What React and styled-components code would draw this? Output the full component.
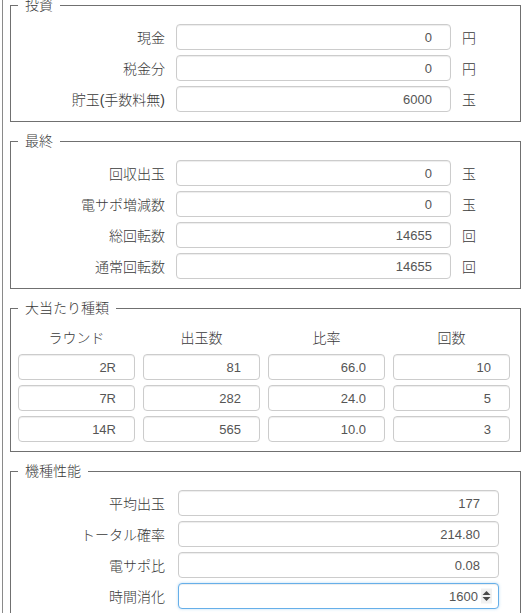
import React from "react";
import styled, { createGlobalStyle, css } from "styled-components";

const GlobalStyle = createGlobalStyle`
  html, body {
    margin: 0;
    padding: 0;
    background: #fff;
  }
  body {
    font-family: "Liberation Sans", "Noto Sans CJK JP", sans-serif;
    font-size: 14px;
    font-weight: 300;
    color: #3a3a3a;
  }
`;

const Page = styled.div`
  margin: -5px 0 0 2px;
  padding: 0 2px 0 7px;
  border-left: 1px solid #8a8a8a;
  min-height: 640px;
`;

const Group = styled.fieldset`
  margin: 0 0 9px;
  padding: 9px 7px 9px;
  border: 1px solid #707070;
  min-width: 0;
`;

const Caption = styled.legend`
  padding: 0 7px;
  font-size: 14px;
  line-height: 20px;
  color: #3a3a3a;
`;

const Rows = styled.div`
  display: flex;
  flex-direction: column;
  gap: 5px;
`;

const Row = styled.div`
  display: grid;
  grid-template-columns: 147px ${({ $inputWidth }) => $inputWidth}px auto;
  column-gap: ${({ $gap }) => $gap}px;
  align-items: center;
`;

const Label = styled.label`
  text-align: right;
  white-space: nowrap;
  font-size: 14px;
  color: #3a3a3a;
`;

const Unit = styled.span`
  font-size: 14px;
  color: #3a3a3a;
`;

const FieldWrap = styled.div`
  position: relative;
`;

const Field = styled.input`
  box-sizing: border-box;
  display: block;
  width: 100%;
  height: 26px;
  padding: 0 18px 0 12px;
  border: 1px solid #ccc;
  border-radius: 4px;
  background: #fff;
  box-shadow: inset 0 1px 1px rgba(0, 0, 0, 0.075);
  font-family: "Liberation Sans", sans-serif;
  font-size: 13px;
  color: #555;
  text-align: right;
  outline: none;

  ${({ $focused }) =>
    $focused &&
    css`
      padding-right: 20px;
      border-color: #66afe9;
      box-shadow: inset 0 1px 1px rgba(0, 0, 0, 0.075),
        0 0 3px rgba(102, 175, 233, 0.45);
    `}
`;

const Spinner = styled.span`
  position: absolute;
  right: 7px;
  top: 50%;
  transform: translateY(-50%);
  display: flex;
  align-items: center;
  justify-content: center;
  width: 11px;
  height: 15px;
  background: #f1f1f1;
`;

const Table = styled.div`
  display: grid;
  grid-template-columns: repeat(4, 117px);
  column-gap: 8px;
  row-gap: 5px;
`;

const HeadCell = styled.div`
  height: 22px;
  line-height: 22px;
  text-align: center;
  font-size: 14px;
  color: #3a3a3a;
`;

const invest = [
  { label: "現金", value: "0", unit: "円" },
  { label: "税金分", value: "0", unit: "円" },
  { label: "貯玉(手数料無)", value: "6000", unit: "玉" },
];

const result = [
  { label: "回収出玉", value: "0", unit: "玉" },
  { label: "電サポ増減数", value: "0", unit: "玉" },
  { label: "総回転数", value: "14655", unit: "回" },
  { label: "通常回転数", value: "14655", unit: "回" },
];

const bonusHead = ["ラウンド", "出玉数", "比率", "回数"];

const bonus = [
  ["2R", "81", "66.0", "10"],
  ["7R", "282", "24.0", "5"],
  ["14R", "565", "10.0", "3"],
];

const spec = [
  { label: "平均出玉", value: "177" },
  { label: "トータル確率", value: "214.80" },
  { label: "電サポ比", value: "0.08" },
  { label: "時間消化", value: "1600", spin: true },
];

const SpinIcon = () => (
  <svg width="9" height="11" viewBox="0 0 9 11">
    <path d="M4.5 0.5L8.5 4.5H0.5Z M0.5 6.5H8.5L4.5 10.5Z" fill="#4a4a4a" />
  </svg>
);

const UnitRows = ({ items }) => (
  <Rows>
    {items.map((item) => (
      <Row key={item.label} $inputWidth={275} $gap={11}>
        <Label>{item.label}</Label>
        <Field type="text" value={item.value} readOnly />
        <Unit>{item.unit}</Unit>
      </Row>
    ))}
  </Rows>
);

const App = () => {
  return (
    <>
      <GlobalStyle />
      <Page>
        <Group>
          <Caption>投資</Caption>
          <UnitRows items={invest} />
        </Group>

        <Group>
          <Caption>最終</Caption>
          <UnitRows items={result} />
        </Group>

        <Group>
          <Caption>大当たり種類</Caption>
          <Table>
            {bonusHead.map((h) => (
              <HeadCell key={h}>{h}</HeadCell>
            ))}
            {bonus.map((row, i) =>
              row.map((cell, j) => (
                <Field key={`${i}-${j}`} type="text" value={cell} readOnly />
              ))
            )}
          </Table>
        </Group>

        <Group>
          <Caption>機種性能</Caption>
          <Rows>
            {spec.map((item) => (
              <Row key={item.label} $inputWidth={321} $gap={13}>
                <Label>{item.label}</Label>
                <FieldWrap>
                  <Field
                    type="text"
                    value={item.value}
                    readOnly
                    $focused={item.spin}
                  />
                  {item.spin && (
                    <Spinner>
                      <SpinIcon />
                    </Spinner>
                  )}
                </FieldWrap>
              </Row>
            ))}
          </Rows>
        </Group>
      </Page>
    </>
  );
};

export default App;
